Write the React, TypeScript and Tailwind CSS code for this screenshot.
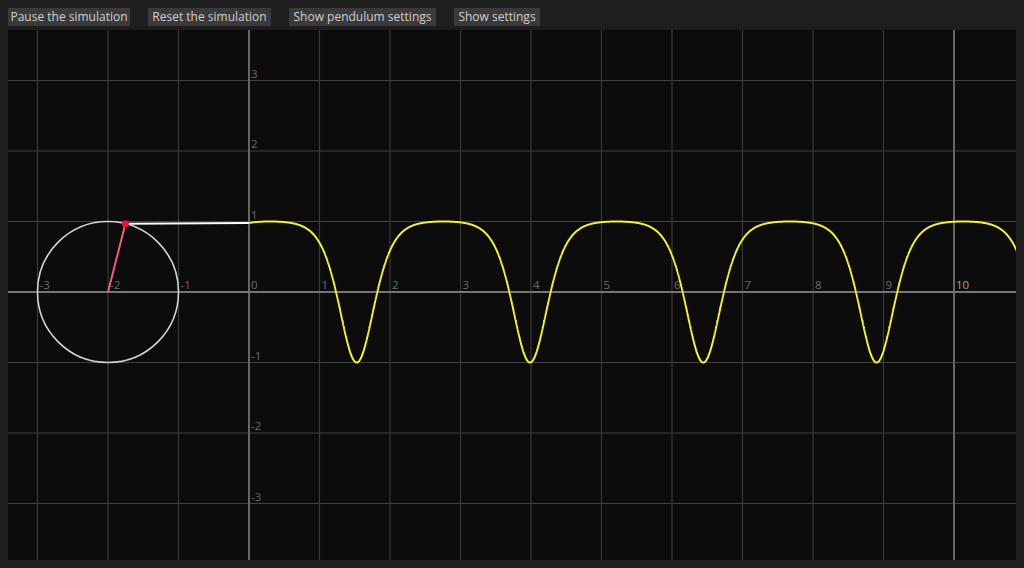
const W = 1008;
const H = 530;
const OX = 241;
const OY = 262;
const U = 70.5;

const buttons = [
  { label: "Pause the simulation", w: "w-[122px]" },
  { label: "Reset the simulation", w: "w-[123px]" },
  { label: "Show pendulum settings", w: "w-[147px]" },
  { label: "Show settings", w: "w-[86px]" },
];

// trace of the bob height: a rotating pendulum, slow at the top, fast through the bottom
function buildTrace() {
  const b = 100;
  const step = 0.004;
  const n = Math.ceil(Math.PI / step);
  const T: number[] = [0];
  for (let i = 1; i <= n; i++) {
    const mid = (i - 0.5) * step;
    T.push(T[i - 1] + step / Math.sqrt(1 + b * Math.sin(mid / 2) ** 2));
  }
  const half = 86.65;
  const s = half / T[n];
  const pts: [number, number][] = [];
  for (let k = -1; k <= 5; k++) {
    const c = 262.05 + 173.3 * k;
    for (let i = -n; i <= n; i++) {
      const phi = i * step;
      const x = c + Math.sign(i) * s * T[Math.abs(i)];
      const y = OY - U * Math.cos(phi);
      if (x >= OX && x <= W + 4) pts.push([x, y]);
    }
  }
  return pts;
}

const trace = buildTrace();
const tracePath = trace.map((p, i) => `${i ? "L" : "M"}${p[0].toFixed(2)} ${p[1].toFixed(2)}`).join("");

const phiBob = 0.25;
const cx = OX - 2 * U;
const bx = cx + U * Math.sin(phiBob);
const by = OY - U * Math.cos(phiBob);

function Plot() {
  const xs = Array.from({ length: 14 }, (_, i) => i - 3);
  const ys = [3, 2, 1, 0, -1, -2, -3];
  return (
    <svg width={W} height={H} viewBox={`0 0 ${W} ${H}`} className="block">
      {xs.map((k) =>
        k === 0 || k === 10 ? null : (
          <line key={"vx" + k} x1={OX + U * k} y1={0} x2={OX + U * k} y2={H} stroke="#393939" strokeWidth={1.2} />
        )
      )}
      {ys.map((v) =>
        v === 0 ? null : (
          <line key={"hy" + v} x1={0} y1={OY - U * v} x2={W} y2={OY - U * v} stroke="#414141" strokeWidth={1.2} />
        )
      )}
      <line x1={OX + U * 10} y1={0} x2={OX + U * 10} y2={H} stroke="#656565" strokeWidth={2} />
      <line x1={OX} y1={0} x2={OX} y2={H} stroke="#656565" strokeWidth={2} />
      <line x1={0} y1={OY} x2={W} y2={OY} stroke="#767676" strokeWidth={2} />

      <g fontFamily="'Open Sans', sans-serif" fontSize={11.5}>
        {xs.map((k) => (
          <text key={"lx" + k} x={OX + U * k + 2} y={OY - 3} fill={k === 10 ? "#a0a0a0" : "#6a6a6a"}>
            {k}
          </text>
        ))}
        {ys
          .filter((v) => v !== 0)
          .map((v) => (
            <text key={"ly" + v} x={OX + 2} y={OY - U * v - 3} fill="#6a6a6a">
              {v}
            </text>
          ))}
      </g>

      <circle cx={cx} cy={OY} r={U} fill="none" stroke="#d4d4d4" strokeWidth={1.6} />
      <line x1={cx} y1={OY} x2={bx} y2={by} stroke="#e8607e" strokeWidth={2} />
      <line x1={bx} y1={by} x2={OX} y2={trace[0][1]} stroke="#ffffff" strokeWidth={2} />
      <path d={tracePath} fill="none" stroke="#f0f042" strokeWidth={2} strokeLinejoin="round" />
      <circle cx={bx} cy={by} r={3.5} fill="#ee1035" />
    </svg>
  );
}

export default function App() {
  return (
    <div className="w-[1024px] h-[568px] bg-[#1e1e1e] flex flex-col px-2 pt-2 pb-2 gap-1 overflow-hidden" style={{ fontFamily: "'Open Sans', sans-serif" }}>
      <div className="flex gap-[18px] h-[18px] shrink-0">
        {buttons.map((b) => (
          <button key={b.label} className={`${b.w} h-[18px] bg-[#3a3a3a] text-[#cfcfcf] text-[12px] leading-[18px] text-center whitespace-nowrap`}>
            {b.label}
          </button>
        ))}
      </div>
      <div className="flex-1 bg-[#0c0c0c] overflow-hidden">
        <Plot />
      </div>
    </div>
  );
}
